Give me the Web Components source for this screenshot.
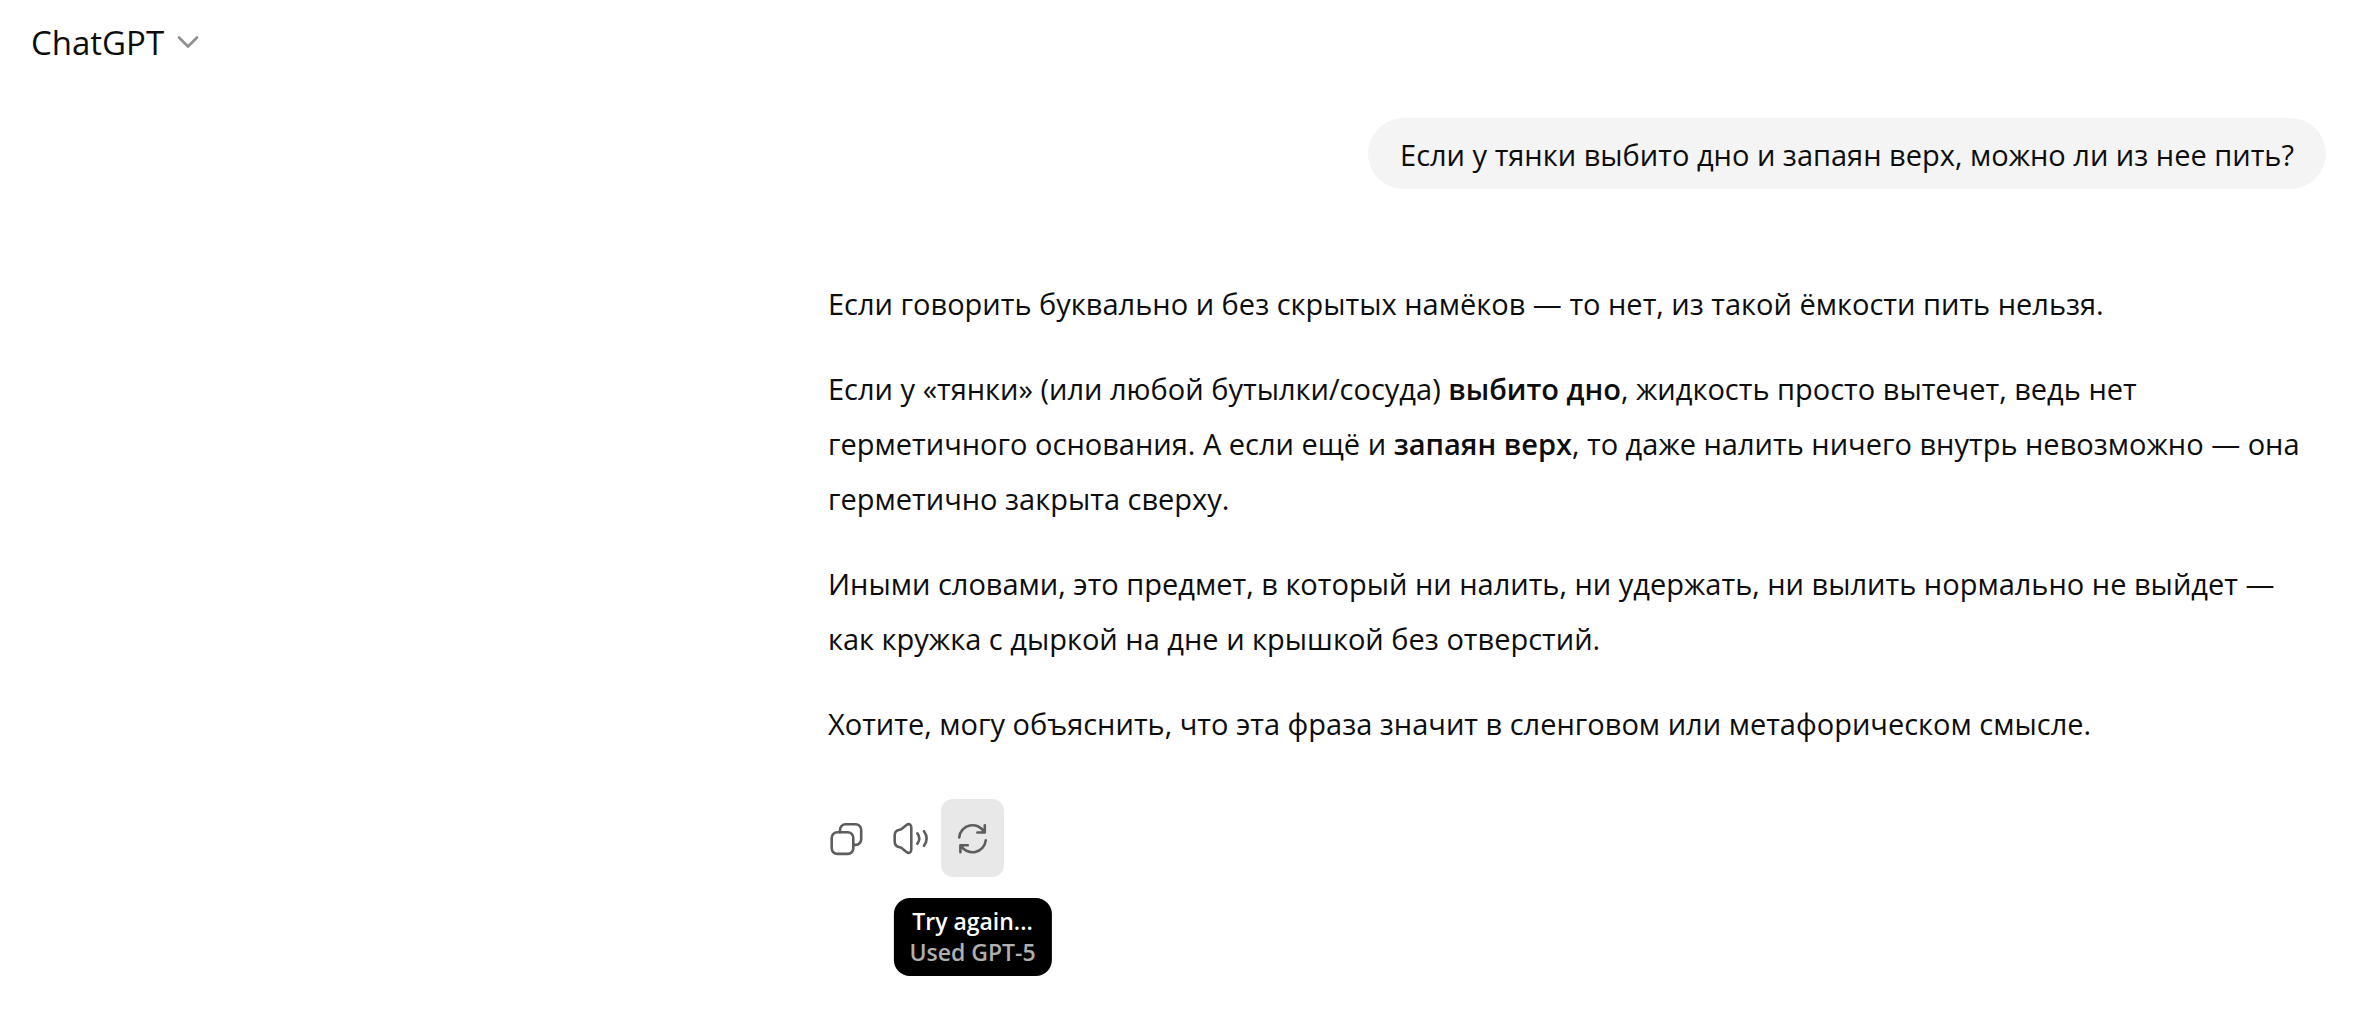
<!DOCTYPE html>
<html lang="ru">
<head>
<meta charset="utf-8">
<meta name="viewport" content="width=device-width, initial-scale=1">
<title>ChatGPT</title>
<style>
  body {
    min-height: 100vh;
    margin: 0;
    background: #fff;
    color: #0d0d0d;
    font-family: "Open Sans", "Noto Sans", sans-serif;
    font-size: 29px;
    line-height: 55px;
  }
</style>
</head>
<body>

<chat-header>ChatGPT</chat-header>

<chat-thread>
  <user-message>Если у тянки выбито дно и запаян верх, можно ли из нее пить?</user-message>
  <assistant-message>
    <p>Если говорить буквально и без скрытых намёков — то нет, из такой ёмкости пить нельзя.</p>
    <p>Если у «тянки» (или любой бутылки/сосуда) <strong>выбито дно</strong>, жидкость просто вытечет, ведь нет герметичного основания. А если ещё и <strong>запаян верх</strong>, то даже налить ничего внутрь невозможно — она герметично закрыта сверху.</p>
    <p>Иными словами, это предмет, в который ни налить, ни удержать, ни вылить нормально не выйдет — как кружка с дыркой на дне и крышкой без отверстий.</p>
    <p>Хотите, могу объяснить, что эта фраза значит в сленговом или метафорическом смысле.</p>
    <message-action slot="actions" icon="copy" label="Copy"></message-action>
    <message-action slot="actions" icon="audio" label="Read aloud"></message-action>
    <message-action slot="actions" icon="retry" label="Try again" active>
      <action-tooltip slot="tooltip">Try again...<span slot="detail">Used GPT-5</span></action-tooltip>
    </message-action>
  </assistant-message>
</chat-thread>

<script>
const icons = {
  copy: `
    <rect x="4.7" y="13.3" width="21.6" height="21.6" rx="5.6"/>
    <path d="M13 13.3v-2.5a5.6 5.6 0 0 1 5.6-5.6h10a5.6 5.6 0 0 1 5.6 5.6v9.5a5.6 5.6 0 0 1-5.6 5.6h-2.3"/>`,
  audio: `
    <path d="M21.3 8.6v21.8c0 3.2-2.4 4.4-4.8 2.5l-4.3-3.5c-.8-.7-1.6-1-2.6-1.2-3-.5-4.9-2.5-4.9-5.5v-6.4c0-3 1.9-5 4.9-5.5 1-.2 1.8-.5 2.6-1.2l4.3-3.5c2.4-1.9 4.8-.7 4.8 2.5z"/>
    <path d="M27.4 14.4c2.4 3.2 2.4 7 0 10.2M34 12.2c3.3 4.6 3.3 10 0 14.6"/>`,
  retry: `
    <path d="M6.2 18.4A13.4 13.4 0 0 1 31.4 13.4M31.8 6.3v7.2h-7.4"/>
    <path d="M32.8 21.2A13.4 13.4 0 0 1 7.8 26.4M7.4 33.2V26.2h7.4"/>`
};

function createTemplate(html) {
  const template = document.createElement("template");
  template.innerHTML = html;
  return template;
}

const headerTemplate = createTemplate(`
<style>
  :host {
    display: flex;
    align-items: center;
    height: 84px;
    padding: 0 31px;
  }
  button {
    display: flex;
    align-items: center;
    gap: 13px;
    padding: 0;
    border: 0;
    background: none;
    color: inherit;
    font-family: inherit;
    font-size: 33px;
    line-height: 55px;
    cursor: pointer;
  }
  svg {
    fill: none;
    stroke: #8f8f8f;
    stroke-width: 2.6;
    stroke-linecap: round;
    stroke-linejoin: round;
  }
</style>
<button type="button" aria-haspopup="menu">
  <slot></slot>
  <svg width="22" height="14" viewBox="0 0 22 14" aria-hidden="true"><path d="M2 2.5l9 9 9-9"/></svg>
</button>
`);

class ChatHeader extends HTMLElement {
  constructor() {
    super();
    this.attachShadow({ mode: "open" });
    this.shadowRoot.appendChild(headerTemplate.content.cloneNode(true));
  }
}

const threadTemplate = createTemplate(`
<style>
  :host {
    display: block;
    padding: 34px 51px 32px 32px;
  }
  main {
    display: flex;
    flex-direction: column;
    gap: 87px;
    max-width: 1498px;
    margin-left: auto;
  }
</style>
<main><slot></slot></main>
`);

class ChatThread extends HTMLElement {
  constructor() {
    super();
    this.attachShadow({ mode: "open" });
    this.shadowRoot.appendChild(threadTemplate.content.cloneNode(true));
  }
}

const userTemplate = createTemplate(`
<style>
  :host {
    display: flex;
    justify-content: flex-end;
  }
  .bubble {
    padding: 9px 32px 7px;
    border-radius: 36px;
    background: #f4f4f4;
  }
</style>
<div class="bubble"><slot></slot></div>
`);

class UserMessage extends HTMLElement {
  constructor() {
    super();
    this.attachShadow({ mode: "open" });
    this.shadowRoot.appendChild(userTemplate.content.cloneNode(true));
  }
}

const assistantTemplate = createTemplate(`
<style>
  :host {
    display: block;
    padding-right: 8px;
  }
  .text {
    display: flex;
    flex-direction: column;
    gap: 30px;
  }
  ::slotted(p) {
    margin: 0;
  }
  .actions {
    display: flex;
    margin: 48px 0 0 -13px;
  }
</style>
<div class="text"><slot></slot></div>
<div class="actions"><slot name="actions"></slot></div>
`);

class AssistantMessage extends HTMLElement {
  constructor() {
    super();
    this.attachShadow({ mode: "open" });
    this.shadowRoot.appendChild(assistantTemplate.content.cloneNode(true));
    // semibold is set here, ::slotted does not reach the nested tags
    this.querySelectorAll("strong").forEach(item => item.style.fontWeight = 600);
  }
}

const actionTemplate = createTemplate(`
<style>
  :host {
    display: block;
    position: relative;
  }
  button {
    display: flex;
    align-items: center;
    justify-content: center;
    width: 63px;
    height: 78px;
    padding: 0;
    border: 0;
    border-radius: 12px;
    background: none;
    color: #5d5d5d;
    cursor: pointer;
  }
  button:hover,
  :host([active]) button {
    background: #e8e8e8;
  }
  svg {
    fill: none;
    stroke: currentColor;
    stroke-width: 2.6;
    stroke-linecap: round;
    stroke-linejoin: round;
  }
  ::slotted(action-tooltip) {
    position: absolute;
    top: 99px;
    left: 50%;
    transform: translateX(-50%);
  }
</style>
<button type="button"><svg width="39" height="39" viewBox="0 0 39 39" aria-hidden="true"></svg></button>
<slot name="tooltip"></slot>
`);

class MessageAction extends HTMLElement {
  constructor() {
    super();
    this.attachShadow({ mode: "open" });
  }

  connectedCallback() {
    const template = actionTemplate.content.cloneNode(true);
    this.shadowRoot.appendChild(template);

    this.shadowRoot.querySelector("button").setAttribute("aria-label", this.getAttribute("label"));
    this.shadowRoot.querySelector("svg").innerHTML = icons[this.getAttribute("icon")];
  }
}

const tooltipTemplate = createTemplate(`
<style>
  :host {
    display: flex;
    flex-direction: column;
    align-items: center;
    padding: 8px 16px;
    border-radius: 16px;
    background: #000;
    color: #fff;
    font-size: 23px;
    font-weight: 600;
    line-height: 31px;
    white-space: nowrap;
  }
  .detail {
    color: #afafaf;
  }
</style>
<div><slot></slot></div>
<div class="detail"><slot name="detail"></slot></div>
`);

class ActionTooltip extends HTMLElement {
  constructor() {
    super();
    this.attachShadow({ mode: "open" });
    this.shadowRoot.appendChild(tooltipTemplate.content.cloneNode(true));
  }

  connectedCallback() {
    this.setAttribute("role", "tooltip");
  }
}

customElements.define("chat-header", ChatHeader);
customElements.define("chat-thread", ChatThread);
customElements.define("user-message", UserMessage);
customElements.define("assistant-message", AssistantMessage);
customElements.define("message-action", MessageAction);
customElements.define("action-tooltip", ActionTooltip);
</script>
</body>
</html>
